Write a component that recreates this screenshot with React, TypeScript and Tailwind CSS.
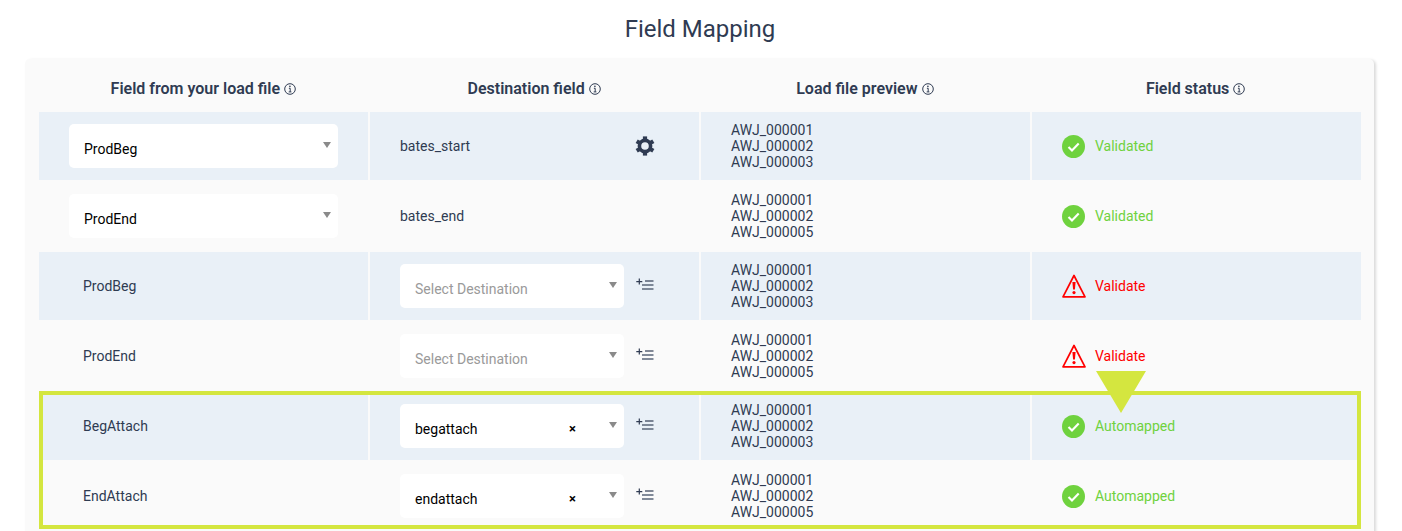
const cell = "flex items-center h-[68px]";

function InfoIcon() {
  return (
    <svg viewBox="0 0 12 12" className="ml-[4px] h-[12px] w-[12px] shrink-0" fill="none" stroke="#2f3b52">
      <circle cx="6" cy="6" r="5.3" strokeWidth="1" />
      <path d="M4.9 5.3H6.2V8.8M4.7 8.9H7.4" strokeWidth="1" />
      <circle cx="5.9" cy="3.4" r="0.8" fill="#2f3b52" stroke="none" />
    </svg>
  );
}

function GearIcon() {
  return (
    <svg viewBox="0 0 20 20" className="ml-[165px] h-[20px] w-[20px]" fill="none" stroke="#2f3b52">
      <circle cx="10" cy="10" r="5.6" strokeWidth="3.6" />
      {[0, 60, 120, 180, 240, 300].map((a) => (
        <path key={a} d="M10 3.5V0.4" strokeWidth="4.2" transform={`rotate(${a} 10 10)`} />
      ))}
    </svg>
  );
}

function HeaderCell({ title }: { title: string }) {
  return (
    <div className="flex items-center justify-center text-[16px] font-semibold text-[#2f3b52]">
      {title}
      <InfoIcon />
    </div>
  );
}

function Caret({ className }: { className: string }) {
  return <span className={`absolute top-[18px] h-0 w-0 border-x-[4px] border-t-[6px] border-x-transparent border-t-[#8a8a8a] ${className}`} />;
}

function SourceSelect({ value }: { value: string }) {
  return (
    <div className="relative ml-[30px] flex h-[44px] w-[269px] items-center rounded-[5px] bg-white pl-[15px] pt-[6px] text-[14px] text-black">
      {value}
      <Caret className="right-[7px]" />
    </div>
  );
}

function DestSelect({ value }: { value?: string }) {
  return (
    <div className="relative flex h-[44px] w-[224px] items-center rounded-[5px] bg-white pl-[15px] pt-[6px] text-[14px]">
      {value ? <span className="text-black">{value}</span> : <span className="text-[#9a9a9a]">Select Destination</span>}
      {value && <span className="absolute left-[169px] top-[15px] text-[13px] font-bold text-black">×</span>}
      <Caret className="right-[7px]" />
    </div>
  );
}

function AddListIcon() {
  return (
    <svg viewBox="0 0 18 14" className="ml-[12px] mt-[-4px] h-[14px] w-[18px]" fill="none" stroke="#2f3b52">
      <path d="M3.3 1.6V7.6M0.3 4.6H6.3" strokeWidth="1.2" />
      <path d="M9 4H17.5" strokeWidth="1.2" />
      <path d="M6 8H17.5M6 12H17.5" strokeWidth="1.4" stroke="#5a657a" />
    </svg>
  );
}

function CheckIcon() {
  return (
    <svg viewBox="0 0 24 24" className="mr-[1px] h-[23px] w-[23px] shrink-0">
      <circle cx="12" cy="12" r="12" fill="#6fd23e" />
      <path d="M6.8 12.6L10.4 16.2L17.4 8.8" fill="none" stroke="#fff" strokeWidth="2.2" />
    </svg>
  );
}

function WarnIcon() {
  return (
    <svg viewBox="0 0 24 24" className="mt-[-1px] h-[24px] w-[24px] shrink-0">
      <path d="M12 1.5L23 22.8H1Z" fill="none" stroke="#ff0000" strokeWidth="1.7" strokeLinejoin="round" />
      <path d="M10.4 8H13.6L12.9 15.5H11.1Z" fill="#ff0000" />
      <circle cx="12" cy="18.6" r="1.6" fill="#ff0000" />
    </svg>
  );
}

function Status({ kind, label }: { kind: "ok" | "warn"; label: string }) {
  return (
    <div className="flex items-center pl-[30px]">
      {kind === "ok" ? <CheckIcon /> : <WarnIcon />}
      <span className={`ml-[9px] text-[14px] ${kind === "ok" ? "text-[#6fd23e]" : "text-[#ff0000]"}`}>{label}</span>
    </div>
  );
}

type RowData = {
  source: React.ReactNode;
  dest: React.ReactNode;
  preview: string[];
  status: React.ReactNode;
  blue: boolean;
};

function Row({ source, dest, preview, status, blue }: RowData) {
  const bg = blue ? "bg-[#e9f0f7]" : "";
  return (
    <div className="grid grid-cols-4 gap-[2px] text-[14px] text-[#2f3b52]">
      <div className={`${cell} ${bg}`}>{source}</div>
      <div className={`${cell} ${bg} pl-[30px]`}>{dest}</div>
      <div className={`${cell} ${bg} pl-[30px] text-[14px] leading-[16px]`}>
        <div>
          {preview.map((p) => (
            <div key={p}>{p}</div>
          ))}
        </div>
      </div>
      <div className={`${cell} ${bg}`}>{status}</div>
    </div>
  );
}

const plain = (t: string) => <span className="pl-[44px]">{t}</span>;
const first = ["AWJ_000001", "AWJ_000002", "AWJ_000003"];
const second = ["AWJ_000001", "AWJ_000002", "AWJ_000005"];

function DestWithAdd({ value }: { value?: string }) {
  return (
    <div className="flex items-center">
      <DestSelect value={value} />
      <AddListIcon />
    </div>
  );
}

export default function App() {
  return (
    <div className="h-[531px] overflow-hidden bg-white font-['Roboto',sans-serif]">
      <h1 className="pr-[2px] pt-[13px] text-center text-[24px] leading-[32px] text-[#2f3b52]">Field Mapping</h1>
      <div className="ml-[25px] mt-[14px] h-[480px] w-[1349px] rounded-t-[5px] bg-[#fafafa] px-[14px] shadow-[2px_1px_3px_rgba(0,0,0,0.15)]">
        <div className="grid h-[53px] grid-cols-4 gap-[2px] pb-[5px] pt-[12px]">
          <HeaderCell title="Field from your load file" />
          <HeaderCell title="Destination field" />
          <HeaderCell title="Load file preview" />
          <HeaderCell title="Field status" />
        </div>
        <div className="flex w-[1322px] flex-col gap-[2px]">
          <Row
            blue
            source={<SourceSelect value="ProdBeg" />}
            dest={
              <div className="flex w-full items-center">
                <span>bates_start</span>
                <GearIcon />
              </div>
            }
            preview={first}
            status={<Status kind="ok" label="Validated" />}
          />
          <Row
            blue={false}
            source={<SourceSelect value="ProdEnd" />}
            dest={<span>bates_end</span>}
            preview={second}
            status={<Status kind="ok" label="Validated" />}
          />
          <Row blue source={plain("ProdBeg")} dest={<DestWithAdd />} preview={first} status={<Status kind="warn" label="Validate" />} />
          <Row blue={false} source={plain("ProdEnd")} dest={<DestWithAdd />} preview={second} status={<Status kind="warn" label="Validate" />} />
          <div className="relative flex flex-col gap-[2px]">
            <Row blue source={plain("BegAttach")} dest={<DestWithAdd value="begattach" />} preview={first} status={<Status kind="ok" label="Automapped" />} />
            <Row blue={false} source={plain("EndAttach")} dest={<DestWithAdd value="endattach" />} preview={second} status={<Status kind="ok" label="Automapped" />} />
            <div className="absolute left-0 top-[-1px] h-[138px] w-[1322px] border-[4px] border-[#d4e63f]" />
            <div className="absolute left-[1057px] top-[-21px] h-0 w-0 border-x-[25px] border-t-[42px] border-x-transparent border-t-[#d4e63f]" />
          </div>
        </div>
      </div>
    </div>
  );
}
